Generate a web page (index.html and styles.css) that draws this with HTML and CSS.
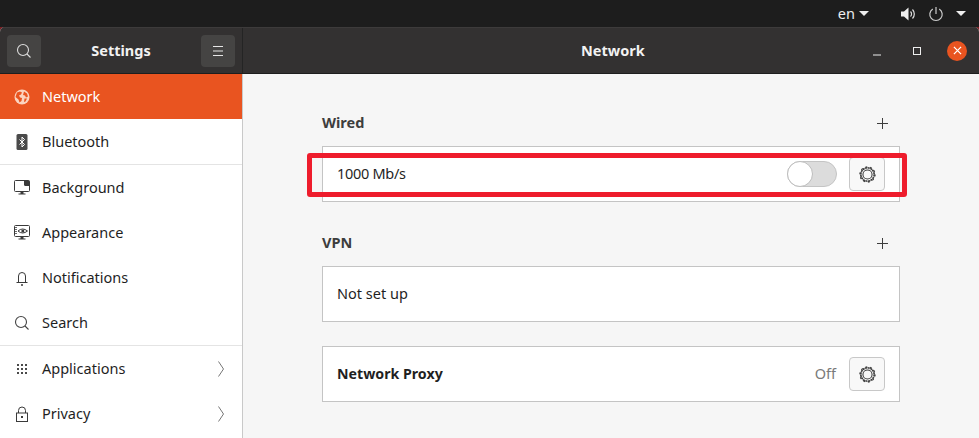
FILE: index.html
```html
<!DOCTYPE html>
<html lang="en">
<head>
<meta charset="utf-8">
<title>Settings - Network</title>
<link rel="stylesheet" href="styles.css">
</head>
<body>
<div class="topbar">
  <span class="lang">en</span>
  <svg class="caret caret-lang" viewBox="0 0 10 5"><path d="M0 0h10L5 5z"/></svg>
  <svg class="tray tray-vol" viewBox="0 0 16 16"><path d="M1 5.500h3L8.500 1.500v13L4 10.500H1z" fill="#eee"/><path d="M10.500 5.500a3.500 3.500 0 0 1 0 5M12.500 3.500a6.500 6.500 0 0 1 0 9" fill="none" stroke="#ddd" stroke-width="1.200"/></svg>
  <svg class="tray tray-pow" viewBox="0 0 16 16"><path d="M8 1v7M4.800 3A6.200 6.200 0 1 0 11.200 3" fill="none" stroke="#ccc" stroke-width="1.200"/></svg>
  <svg class="caret caret-pow" viewBox="0 0 10 5"><path d="M0 0h10L5 5z"/></svg>
</div>
<div class="corner-bg">
<div class="window">
  <header class="titlebar">
    <div class="title-left">
      <button class="hbtn"><svg class="ic16" viewBox="0 0 16 16"><circle cx="7" cy="7" r="5.500" fill="none" stroke="#ddd" stroke-width="1.100"/><path d="M11 11l3.500 3.500" stroke="#ddd" stroke-width="1.100"/></svg></button>
      <span class="title">Settings</span>
      <button class="hbtn"><svg class="ic16" viewBox="0 0 16 16"><path d="M3 3.500h10M3 8h10M3 12.500h10" stroke="#e6e6e6" stroke-width="1"/></svg></button>
    </div>
    <div class="title-right">
      <span class="title title-net">Network</span>
      <div class="wm">
        <svg class="wm-min" viewBox="0 0 8 2"><path d="M0 1h8" stroke="#eee" stroke-width="1"/></svg>
        <svg class="wm-max" viewBox="0 0 8 8"><rect x=".5" y=".5" width="7" height="7" fill="none" stroke="#eee" stroke-width="1"/></svg>
        <span class="wm-close"><svg viewBox="0 0 8 8"><path d="M.8.8l6.400 6.400M7.200.8L.8 7.200" stroke="#fff" stroke-width="1.100"/></svg></span>
      </div>
    </div>
  </header>
  <div class="body">
    <nav class="sidebar">
      <div class="item active"><svg class="nav-ic" viewBox="0 0 16 16"><circle cx="8" cy="8" r="7.500" fill="#fbd3bf"/><path d="M3 3.500l3-1 2 1-1 2-2 1 1 2 2 .5-.5 3-2 1.500-1-3-3-2.500zM10 2.500l3 2 1 3-2 1-1-2-2-.5zM10.500 9.500l2.500 0-1.500 3-1.500 .5z" fill="#e95420"/></svg><span>Network</span></div>
      <div class="item sep"><svg class="nav-ic" viewBox="0 0 16 16"><rect x="2.500" y="0" width="11" height="16" rx="1.500" fill="#4a4a4a"/><path d="M5.500 5.500l5 5L8 13V3l2.500 2.500-5 5" fill="none" stroke="#fff" stroke-width="1"/></svg><span>Bluetooth</span></div>
      <div class="item"><svg class="nav-ic" viewBox="0 0 16 16"><path d="M1.500.5h13a1 1 0 0 1 1 1v9a1 1 0 0 1-1 1h-13a1 1 0 0 1-1-1v-9a1 1 0 0 1 1-1z" fill="none" stroke="#3a3a3a"/><path d="M10 .5h4.500a1 1 0 0 1 1 1V6h-4a1.500 1.500 0 0 1-1.500-1.500z" fill="#3a3a3a"/><path d="M6.500 12h3v1.500h-3zM4.500 13.500h7v1h-7z" fill="#3a3a3a"/></svg><span>Background</span></div>
      <div class="item"><svg class="nav-ic" viewBox="0 0 16 16"><rect x=".5" y=".5" width="15" height="11" rx="1" fill="none" stroke="#3a3a3a"/><path d="M2 2v8" stroke="#3a3a3a" stroke-width="1.500" stroke-dasharray="1 1"/><path d="M4 6q4.500-4 9.500 0q-5 4-9.500 0z" fill="none" stroke="#3a3a3a"/><circle cx="8.800" cy="6" r="1.500" fill="#3a3a3a"/><path d="M6.500 12h3v1.500h-3zM4.500 13.500h7v1h-7z" fill="#3a3a3a"/></svg><span>Appearance</span></div>
      <div class="item"><svg class="nav-ic" viewBox="0 0 16 16"><path d="M4.500 12.500V6a3.500 3.500 0 0 1 7 0v6.500" fill="none" stroke="#3a3a3a"/><path d="M2.500 12.500h11" stroke="#3a3a3a"/><circle cx="8" cy="15" r="1" fill="#3a3a3a"/></svg><span>Notifications</span></div>
      <div class="item sep"><svg class="nav-ic" viewBox="0 0 16 16"><circle cx="7" cy="7" r="5.500" fill="none" stroke="#444" stroke-width="1.100"/><path d="M11 11l3.500 3.500" stroke="#444" stroke-width="1.100"/></svg><span>Search</span></div>
      <div class="item"><svg class="nav-ic" viewBox="0 0 16 16"><path d="M3 3h2v2H3zM7 3h2v2H7zM11 3h2v2h-2zM3 7h2v2H3zM7 7h2v2H7zM11 7h2v2h-2zM3 11h2v2H3zM7 11h2v2H7zM11 11h2v2h-2z" fill="#4a4a4a"/></svg><span>Applications</span><svg class="chev" viewBox="0 0 6 16"><path d="M.5.500L5.500 8 .5 15.500" fill="none" stroke="#777"/></svg></div>
      <div class="item"><svg class="nav-ic" viewBox="0 0 16 16"><rect x="2.500" y="7" width="11" height="8.500" fill="none" stroke="#3a3a3a"/><path d="M4.500 7V4.500a3.500 3.500 0 0 1 7 0V7" fill="none" stroke="#3a3a3a"/><rect x="7" y="10" width="2" height="2" fill="#3a3a3a"/></svg><span>Privacy</span><svg class="chev" viewBox="0 0 6 16"><path d="M.5.500L5.500 8 .5 15.500" fill="none" stroke="#777"/></svg></div>
    </nav>
    <main class="main">
      <div class="col">
        <div class="sec-head sec-wired"><span class="sec-title">Wired</span><svg class="plus" viewBox="0 0 11 11"><path d="M5.500 0v11M0 5.500h11" stroke="#3d3d3d" stroke-width="1"/></svg></div>
        <div class="card">
          <span class="tight">1000 Mb/s</span>
          <div class="card-right">
            <span class="switch"><span class="knob"></span></span>
            <button class="gear-btn"><svg class="gear" viewBox="0 0 16 16"><use href="#gear"/></svg></button>
          </div>
        </div>
        <div class="sec-head sec-vpn"><span class="sec-title">VPN</span><svg class="plus" viewBox="0 0 11 11"><path d="M5.500 0v11M0 5.500h11" stroke="#3d3d3d" stroke-width="1"/></svg></div>
        <div class="card"><span>Not set up</span></div>
        <div class="card card-proxy">
          <span class="strong">Network Proxy</span>
          <div class="card-right">
            <span class="off">Off</span>
            <button class="gear-btn"><svg class="gear" viewBox="0 0 16 16"><use href="#gear"/></svg></button>
          </div>
        </div>
      </div>
    </main>
  </div>
</div>
</div>
<div class="annotation"></div>
<svg class="defs" width="0" height="0"><defs><g id="gear"><circle cx="8" cy="8" r="6.300" fill="none" stroke="#3a3a3a" stroke-width="1.500" stroke-dasharray="2 0.470"/><circle cx="8" cy="8" r="7.200" fill="none" stroke="#3a3a3a" stroke-width="1" stroke-dasharray="1.800 2.720"/><circle cx="8" cy="8" r="4.300" fill="none" stroke="#3a3a3a" stroke-width="1"/></g></defs></svg>
</body>
</html>
```
FILE: styles.css
```css
* { box-sizing: border-box; }
html, body { margin: 0; padding: 0; height: 100%; overflow: hidden; }
body { background: #1d1d1d; font-family: "Noto Sans", "Open Sans", sans-serif; font-size: 14.5px; color: #1f1f1f; position: relative; }
svg { display: block; flex: none; }
button { border: 0; padding: 0; margin: 0; font: inherit; }

.topbar { height: 27px; background: #1d1d1d; display: flex; align-items: center; justify-content: flex-end; color: #eee; }
.lang { font-size: 14.5px; margin-right: 4px; padding-bottom: 1px; }
.caret { width: 10px; height: 5px; fill: #eee; }
.caret-lang { margin-right: 31px; }
.tray { width: 16px; height: 16px; }
.tray-vol { margin-right: 12px; }
.tray-pow { margin-right: 12px; }
.caret-pow { margin-right: 13px; }

.corner-bg { height: 411px; background: linear-gradient(90deg, #7a1f24 0 8px, #1d1d1d 8px 971px, #7a1f24 971px); }
.window { height: 411px; border-radius: 5px 5px 0 0; overflow: hidden; display: flex; flex-direction: column; background: #f6f6f6; }

.titlebar { height: 47px; flex: none; display: flex; background: #333131; border-top: 1px solid #3d3b3b; border-bottom: 1px solid #1e1e1e; color: #f2f2f2; }
.title-left { width: 243px; flex: none; padding: 7px; display: flex; align-items: center; justify-content: space-between; border-right: 1px solid #242424; }
.title { font-weight: 700; font-size: 14.5px; padding-bottom: 2px; }
.title-right { flex: 1; display: flex; align-items: center; position: relative; justify-content: flex-end; }
.title-net { position: absolute; left: 338px; }
.hbtn { width: 34px; height: 32px; background: #454443; border-radius: 4px; display: flex; align-items: center; justify-content: center; }
.ic16 { width: 16px; height: 16px; }
.wm { display: flex; align-items: center; margin-right: 12px; }
.wm-min { width: 8px; height: 2px; margin-top: 9px; margin-right: 32px; }
.wm-max { width: 8px; height: 8px; margin-right: 26px; }
.wm-close { width: 20px; height: 20px; border-radius: 50%; background: #e95420; display: flex; align-items: center; justify-content: center; }
.wm-close svg { width: 9px; height: 9px; }

.body { flex: 1; display: flex; min-height: 0; }
.sidebar { width: 243px; flex: none; background: #fff; border-right: 1px solid #c9c9c9; }
.item { height: 45px; display: flex; align-items: center; padding-left: 14px; padding-right: 18px; }
.item.sep { height: 46px; border-bottom: 1px solid #e4e4e4; }
.item span { flex: 1; padding-bottom: 2px; }
.item.active { background: #e95420; color: #fff; }
.nav-ic { width: 16px; height: 16px; margin-right: 12px; }
.chev { width: 6px; height: 16px; }

.main { flex: 1; padding: 34px 0 0 79px; }
.col { width: 578px; }
.sec-head { height: 37px; display: flex; align-items: center; justify-content: space-between; padding: 0 12px 10px 0; }
.sec-wired { height: 38px; padding-bottom: 11px; }
.sec-vpn { margin-top: 26px; height: 38px; }
.sec-title { font-weight: 700; color: #3d3d3d; }
.plus { width: 11px; height: 11px; margin-top: 4px; }
.sec-vpn .plus { margin-top: 2px; }
.card { height: 56px; background: #fff; border: 1px solid #c4c4c4; padding: 0 14px; display: flex; align-items: center; justify-content: space-between; }
.card > span { padding-bottom: 2px; }
.card-proxy { margin-top: 24px; }
.card-right { display: flex; align-items: center; }
.strong { font-weight: 700; font-size: 14.2px; }
.tight { letter-spacing: -0.3px; }
.off { color: #7a7a7a; margin-right: 13px; padding-bottom: 2px; }
.switch { width: 50px; height: 26px; border-radius: 13px; background: #dcdcdc; border: 1px solid #c4c4c4; margin-right: 12px; display: block; }
.knob { display: block; width: 26px; height: 26px; margin: -1px; border-radius: 50%; background: #fff; border: 1px solid #bdbdbd; }
.gear-btn { width: 36px; height: 34px; background: #f8f8f8; border: 1px solid #c8c8c8; border-radius: 4px; display: flex; align-items: center; justify-content: center; }
.gear { width: 17px; height: 17px; }

.annotation { position: absolute; left: 307px; top: 153px; width: 600px; height: 44px; border: 5px solid #ee1c2c; border-radius: 3px; }
.defs { position: absolute; }
```
